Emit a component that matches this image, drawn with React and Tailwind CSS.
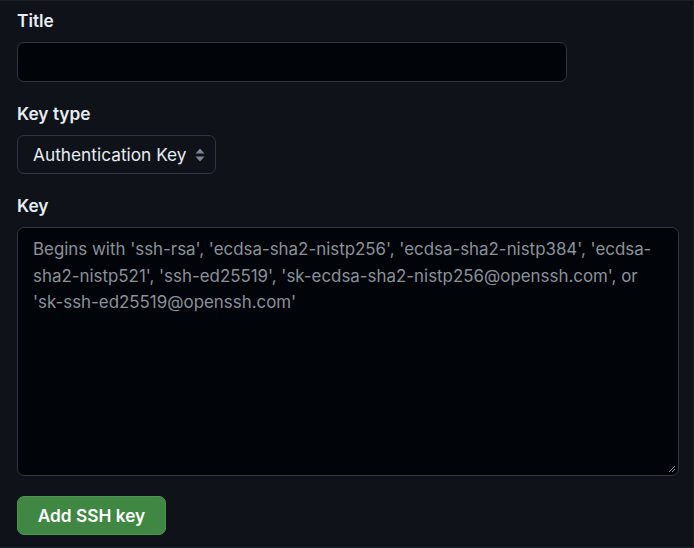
import React from "react";

export default function App() {
  return (
    <div
      className="w-[694px] h-[548px] bg-[#0f1218] border-t border-r border-b border-[#1c2027] overflow-hidden"
      style={{ fontFamily: "Inter, 'Noto Sans', 'Liberation Sans', sans-serif" }}
    >
      <div className="pl-[17px] pt-[8px] flex flex-col">
        <label className="text-[17.3px] leading-[24px] font-semibold text-[#e6edf3]">Title</label>
        <div className="mt-[9px] w-[550px] h-[40px] rounded-[7px] border border-[#30363d] bg-[#010409]" />

        <label className="mt-[20px] text-[17.3px] leading-[24px] font-semibold text-[#e6edf3]">Key type</label>
        <div className="mt-[9px] w-[199px] h-[39px] rounded-[7px] border border-[#30363d] bg-[#0f1218] flex items-center pl-[15px] pr-[10px] justify-between">
          <span className="text-[17.3px] text-[#e6edf3]">Authentication Key</span>
          <svg width="10" height="14" viewBox="0 0 10 14">
            <path d="M5 0.5 L9.5 5.5 L0.5 5.5 Z" fill="#7d8590" />
            <path d="M5 13.5 L9.5 8.5 L0.5 8.5 Z" fill="#7d8590" />
          </svg>
        </div>

        <label className="mt-[20px] text-[17.3px] leading-[24px] font-semibold text-[#e6edf3]">Key</label>
        <div className="relative mt-[9px] w-[662px] h-[249px] rounded-[7px] border border-[#30363d] bg-[#010409] pl-[15px] pr-[12px] pt-[8px]">
          <p className="text-[16.9px] leading-[26.5px] text-[#8b929a]">
            Begins with 'ssh-rsa', 'ecdsa-sha2-nistp256', 'ecdsa-sha2-nistp384', 'ecdsa-sha2-nistp521', 'ssh-ed25519', 'sk-ecdsa-sha2-nistp256@openssh.com', or 'sk-ssh-ed25519@openssh.com'
          </p>
          <svg width="8" height="8" viewBox="0 0 8 8" className="absolute right-[2px] bottom-[2px]">
            <path d="M7 1 L1 7 M7 4 L4 7" stroke="#8b949e" strokeWidth="1" />
          </svg>
        </div>

        <button className="mt-[20px] w-[149px] h-[39px] rounded-[7px] bg-[#3f8743] border border-[#4b964f] text-white text-[17.3px] font-semibold">
          Add SSH key
        </button>
      </div>
    </div>
  );
}
